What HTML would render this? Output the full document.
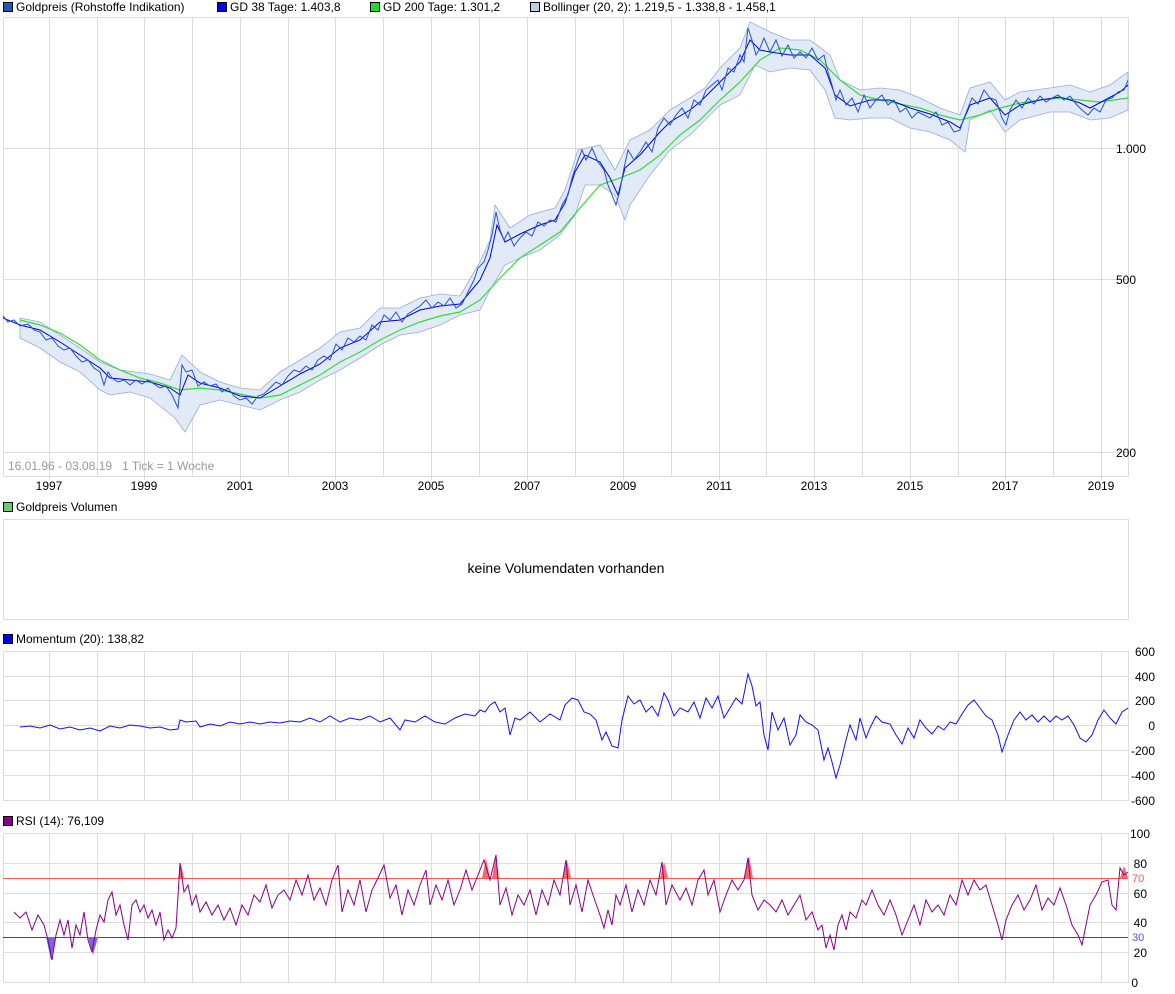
<!DOCTYPE html>
<html><head><meta charset="utf-8"><style>
body{margin:0;background:#fff;width:1175px;height:994px;overflow:hidden;font-family:"Liberation Sans",sans-serif}
svg{position:absolute;left:0;top:0}
text{font-family:"Liberation Sans",sans-serif;font-size:12px;fill:#000}
</style></head><body>
<svg width="1175" height="994" viewBox="0 0 1175 994">
<rect x="3.5" y="2.5" width="9" height="9" fill="#2255bb" stroke="#000"/>
<text x="16" y="11">Goldpreis (Rohstoffe Indikation)</text>
<rect x="217.5" y="2.5" width="9" height="9" fill="#0000ee" stroke="#000"/>
<text x="230" y="11">GD 38 Tage: 1.403,8</text>
<rect x="370.5" y="2.5" width="9" height="9" fill="#22dd22" stroke="#000"/>
<text x="383" y="11">GD 200 Tage: 1.301,2</text>
<rect x="530.5" y="2.5" width="9" height="9" fill="#bbccee" stroke="#000"/>
<text x="543" y="11">Bollinger (20, 2): 1.219,5 - 1.338,8 - 1.458,1</text>

<g stroke="#ddd" fill="none">
<rect x="3.5" y="17.5" width="1125" height="459"/>
<path d="M49.5 17V480M97.5 17V476M144.5 17V480M192.5 17V476M240.5 17V480M288.5 17V476M335.5 17V480M383.5 17V476M431.5 17V480M479.5 17V476M527.5 17V480M575.5 17V476M623.5 17V480M671.5 17V476M719.5 17V480M766.5 17V476M814.5 17V480M862.5 17V476M910.5 17V480M958.5 17V476M1005.5 17V480M1053.5 17V476M1101.5 17V480"/>
<path d="M3 148.5H1128M3 279.5H1128M3 452.5H1128"/>
</g>
<text x="1116" y="153">1.000</text>
<text x="1116" y="284">500</text>
<text x="1116" y="457">200</text>
<g text-anchor="middle">
<text x="49" y="490">1997</text><text x="144" y="490">1999</text><text x="240" y="490">2001</text><text x="335" y="490">2003</text><text x="431" y="490">2005</text><text x="527" y="490">2007</text><text x="623" y="490">2009</text><text x="719" y="490">2011</text><text x="814" y="490">2013</text><text x="910" y="490">2015</text><text x="1005" y="490">2017</text><text x="1101" y="490">2019</text>
</g>
<text x="8" y="470" style="fill:#999">16.01.96 - 03.08.19&#160;&#160; 1 Tick = 1 Woche</text>

<path fill="#e2eaf7" stroke="#99aadd" stroke-width="0.8" d="M20 318L40 322L60 335L80 348L100 362L120 370L150 374L170 380L182 355L200 372L220 382L240 388L260 390L280 372L300 360L320 348L340 332L360 328L380 308L400 308L420 298L440 294L460 296L480 262L490 240L495 205L510 228L530 215L555 208L565 190L578 150L600 145L615 170L630 140L650 130L670 110L690 98L705 88L720 68L740 48L750 22L770 32L790 40L810 40L830 55L840 80L860 90L880 88L900 90L920 98L940 108L960 115L970 88L990 82L1005 100L1020 92L1050 88L1070 85L1090 92L1110 85L1128 72L1128 110L1110 118L1090 120L1070 112L1050 112L1020 120L1005 132L990 110L970 120L965 152L950 140L930 132L910 128L890 118L870 118L850 120L835 118L825 90L810 70L790 68L770 72L755 65L740 95L720 105L700 125L690 135L670 150L650 175L630 205L625 220L615 195L600 185L585 185L575 215L560 235L540 250L520 258L505 265L490 290L480 310L460 315L440 325L420 332L400 335L380 345L360 358L340 370L320 380L300 392L280 400L260 410L240 405L220 400L200 405L185 432L175 418L150 398L130 392L110 395L100 390L80 372L60 362L40 348L20 338Z"/>
<polyline fill="none" stroke="#33dd33" stroke-width="1.2" points="20,320 40,325 60,333 80,345 100,360 120,370 140,378 160,383 180,390 200,388 220,390 240,394 260,398 280,395 300,385 320,375 340,362 360,352 380,340 400,330 420,322 440,316 460,312 480,300 500,278 520,258 540,245 560,232 580,208 600,185 620,178 640,170 660,155 680,135 700,120 720,100 740,82 760,60 780,48 800,50 820,60 840,80 860,95 880,100 900,104 920,108 940,115 960,120 980,115 1000,108 1020,103 1040,100 1060,98 1080,100 1100,102 1128,98"/>
<polyline fill="none" stroke="#0000dd" stroke-width="1" points="3,318 20,325 40,330 60,342 80,355 100,368 110,378 130,380 150,382 170,388 180,395 188,375 200,383 220,388 240,396 260,398 280,386 300,374 320,364 340,348 360,340 380,322 400,320 420,310 440,306 460,304 480,280 490,258 497,225 505,242 520,234 540,225 555,220 565,203 575,172 585,155 600,162 610,178 618,195 625,168 640,155 660,132 670,122 690,110 700,102 720,82 740,62 750,40 760,50 770,52 790,55 810,55 825,68 835,95 850,106 870,100 890,100 910,108 930,114 950,122 960,128 970,105 990,98 1005,115 1020,105 1040,100 1060,97 1080,103 1090,108 1105,100 1120,92 1128,85"/>
<polyline fill="none" stroke="#2255cc" stroke-width="1" points="3,316 8,322 14,320 20,326 28,324 34,330 40,332 46,340 52,338 58,346 64,350 70,348 76,356 82,362 88,360 94,368 100,372 104,385 108,372 112,378 118,382 124,380 130,385 136,380 142,384 148,380 154,384 160,388 166,386 172,395 178,408 182,365 186,372 192,370 198,386 204,382 210,386 216,384 222,392 228,388 234,396 240,400 246,398 252,404 258,396 264,394 270,388 276,382 282,385 288,376 294,370 300,372 306,366 312,370 318,360 324,356 330,360 336,344 342,350 348,338 354,342 360,336 366,340 372,325 378,330 384,315 390,320 396,312 402,322 408,314 414,310 420,306 426,300 432,308 438,302 444,306 450,298 456,308 462,304 468,292 474,280 478,268 484,262 488,250 492,235 496,212 500,230 504,240 508,232 514,246 520,238 526,232 532,236 538,222 544,226 550,220 556,222 562,205 568,195 572,178 578,160 582,150 586,160 592,148 598,162 604,170 608,185 612,195 616,205 620,190 624,168 628,150 634,160 640,152 646,142 652,152 658,128 664,118 670,125 676,115 682,108 688,118 694,100 700,105 706,90 712,85 718,80 722,90 728,68 734,72 740,55 744,62 748,28 752,40 756,55 760,48 764,38 770,52 776,40 782,56 788,45 794,58 800,52 806,58 812,48 818,60 824,55 828,72 832,85 836,100 840,90 846,105 852,98 858,112 864,95 870,108 876,100 882,95 888,105 894,100 900,112 906,108 912,118 918,112 924,115 930,118 936,112 942,125 948,122 954,132 960,130 964,118 968,108 972,98 978,104 984,90 990,98 996,100 1002,118 1006,125 1010,110 1016,100 1022,108 1028,98 1034,104 1040,96 1046,102 1052,98 1058,95 1064,100 1070,96 1076,104 1082,110 1088,115 1094,108 1100,112 1106,100 1112,98 1118,92 1124,90 1128,80"/>

<rect x="3.5" y="502.5" width="9" height="9" fill="#66cc66" stroke="#000"/>
<text x="16" y="511">Goldpreis Volumen</text>
<rect x="3.5" y="519.5" width="1125" height="100" fill="none" stroke="#ddd"/>
<text x="566" y="573" text-anchor="middle" style="font-size:14px">keine Volumendaten vorhanden</text>

<rect x="3.5" y="634.5" width="9" height="9" fill="#0000ee" stroke="#000"/>
<text x="16" y="643">Momentum (20): 138,82</text>
<g stroke="#ddd" fill="none">
<rect x="3.5" y="651.5" width="1125" height="149"/>
<path d="M49.5 651V800M97.5 651V800M144.5 651V800M192.5 651V800M240.5 651V800M288.5 651V800M335.5 651V800M383.5 651V800M431.5 651V800M479.5 651V800M527.5 651V800M575.5 651V800M623.5 651V800M671.5 651V800M719.5 651V800M766.5 651V800M814.5 651V800M862.5 651V800M910.5 651V800M958.5 651V800M1005.5 651V800M1053.5 651V800M1101.5 651V800"/>
<path d="M3 676.5H1128M3 700.5H1128M3 725.5H1128M3 750.5H1128M3 775.5H1128"/>
</g>
<g text-anchor="end"><text x="1155" y="656">600</text><text x="1155" y="681">400</text><text x="1155" y="705">200</text><text x="1155" y="730">0</text><text x="1155" y="755">-200</text><text x="1155" y="780">-400</text><text x="1155" y="805">-600</text></g>
<polyline fill="none" stroke="#1111ee" stroke-width="1" points="20,727 30,726 40,728 50,725 60,729 70,727 80,730 90,728 100,731 110,726 120,728 130,725 140,726 150,728 160,727 170,730 178,729 180,720 186,722 196,721 200,727 210,724 220,726 230,722 240,724 250,722 260,724 270,722 280,723 290,721 300,722 310,718 320,722 330,716 340,722 350,718 360,720 370,716 380,722 390,718 400,730 405,720 415,722 425,716 435,722 445,724 455,718 465,714 475,716 480,710 485,712 490,705 495,702 500,712 505,708 510,735 515,718 520,720 530,712 540,722 550,714 560,720 565,705 572,698 578,700 584,712 590,714 596,720 602,740 606,732 612,746 618,748 622,720 628,696 634,704 640,700 646,712 652,706 658,716 664,693 668,700 674,716 680,708 688,712 694,702 700,718 706,698 712,708 718,696 724,718 730,708 736,698 742,704 748,674 752,686 756,706 760,702 764,735 768,750 772,712 778,730 784,718 790,745 796,735 800,715 806,722 812,725 818,730 824,760 828,748 832,762 836,778 840,765 846,740 850,725 856,740 860,718 866,738 870,728 876,716 882,722 890,724 896,735 902,744 908,728 914,738 920,720 926,728 932,734 938,726 944,730 950,722 956,724 962,714 968,705 974,700 980,708 986,716 992,720 998,735 1002,752 1008,735 1014,720 1020,712 1026,720 1032,715 1038,722 1044,716 1050,722 1056,716 1062,720 1068,716 1074,725 1080,738 1086,742 1092,735 1098,720 1104,710 1110,718 1116,724 1122,712 1128,708"/>

<rect x="3.5" y="816.5" width="9" height="9" fill="#880088" stroke="#000"/>
<text x="16" y="825">RSI (14): 76,109</text>
<g stroke="#ddd" fill="none">
<rect x="3.5" y="833.5" width="1125" height="149"/>
<path d="M49.5 833V982M97.5 833V982M144.5 833V982M192.5 833V982M240.5 833V982M288.5 833V982M335.5 833V982M383.5 833V982M431.5 833V982M479.5 833V982M527.5 833V982M575.5 833V982M623.5 833V982M671.5 833V982M719.5 833V982M766.5 833V982M814.5 833V982M862.5 833V982M910.5 833V982M958.5 833V982M1005.5 833V982M1053.5 833V982M1101.5 833V982"/>
<path d="M3 863.5H1128M3 893.5H1128M3 922.5H1128M3 952.5H1128"/>
</g>
<line x1="3" y1="878.5" x2="1128" y2="878.5" stroke="#ff5555"/>
<line x1="3" y1="937.5" x2="1128" y2="937.5" stroke="#773366"/>
<g text-anchor="end"><text x="1150" y="838">100</text><text x="1147" y="868">80</text><text x="1147" y="898">60</text><text x="1147" y="927">40</text><text x="1147" y="957">20</text><text x="1138" y="987">0</text></g>
<text x="1132" y="882" style="font-size:11px;fill:#ff5555">70</text>
<text x="1132" y="941" style="font-size:11px;fill:#5555ee">30</text>
<g fill="#ff6666"><path d="M178,878 L181,864 L184,878Z M482,878 L486,858 L490,878Z M492,878 L496,855 L499,878Z M563,878 L567,860 L571,878Z M660,878 L664,862 L668,878Z M744,878 L749,856 L753,878Z M1120,878 L1124,866 L1128,878Z"/></g>
<g fill="#7766dd"><path d="M46,937 L51,960 L56,937Z M88,937 L93,955 L98,937Z"/></g>
<polyline fill="none" stroke="#880088" stroke-width="1" points="14,912 20,918 26,912 32,930 38,915 44,925 48,940 52,960 56,935 60,920 64,935 68,920 72,948 76,925 80,935 84,912 88,940 92,952 96,930 100,915 104,922 108,900 112,892 116,915 120,905 124,925 128,940 132,905 136,900 140,912 144,905 148,918 152,910 156,925 160,912 164,940 168,930 172,938 176,928 180,863 184,892 188,885 192,905 196,895 200,912 206,902 212,915 218,905 224,920 230,908 236,925 242,905 248,915 254,895 260,902 266,885 272,908 278,895 284,890 290,900 296,880 302,895 308,875 314,900 320,888 326,905 332,880 338,865 342,912 348,890 354,905 360,880 366,912 372,890 378,878 384,865 390,898 396,885 402,915 408,890 414,905 420,885 426,870 430,905 436,885 442,900 448,880 454,905 460,890 466,870 472,890 478,875 484,860 490,880 496,855 500,905 506,888 512,915 518,895 524,905 530,890 536,915 542,890 548,905 554,880 560,895 566,860 570,905 576,885 582,912 588,880 594,898 600,915 604,928 608,910 612,925 616,895 620,905 626,885 632,912 638,890 644,905 650,880 656,895 662,862 666,905 672,885 680,900 686,888 692,905 698,880 704,870 708,895 714,880 720,912 726,895 732,880 738,890 744,880 748,858 752,895 758,910 764,900 770,905 776,912 782,900 788,915 794,905 800,895 806,920 812,912 818,930 822,925 826,948 830,935 834,950 838,925 842,915 846,930 850,912 856,918 862,900 866,905 872,890 878,905 884,915 890,900 896,915 902,935 908,920 914,905 920,925 926,900 932,912 938,905 944,915 950,895 956,905 962,880 968,895 974,880 980,890 986,885 992,905 998,925 1002,940 1006,920 1012,905 1018,895 1024,910 1030,900 1036,885 1042,910 1048,898 1054,905 1060,888 1066,905 1072,925 1078,935 1082,945 1086,925 1090,905 1096,895 1102,882 1108,880 1112,905 1116,910 1120,868 1124,875 1128,872"/>
</svg>
</body></html>
